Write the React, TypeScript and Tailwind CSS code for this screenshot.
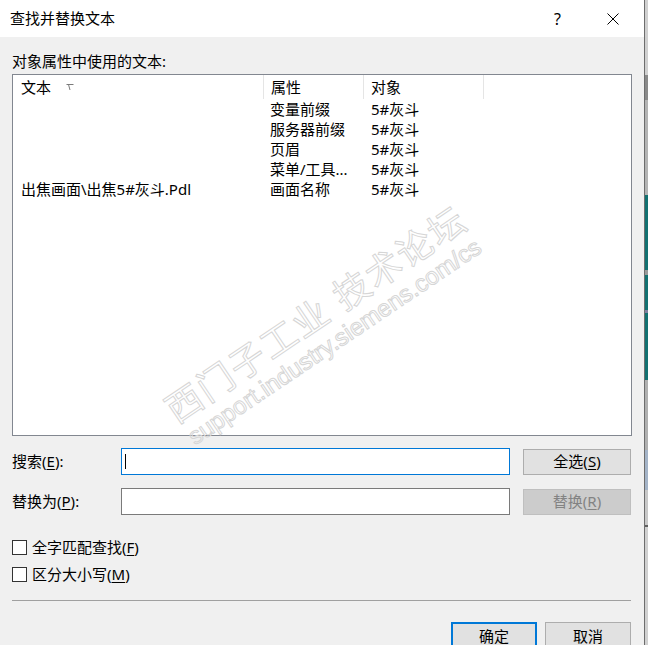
import type { ReactNode } from "react"

function Key({ k }: { k: string }) {
  return (
    <span>
      (<span className="underline underline-offset-2">{k}</span>)
    </span>
  )
}

const rows: [string, string, string][] = [
  ["", "变量前缀", "5#灰斗"],
  ["", "服务器前缀", "5#灰斗"],
  ["", "页眉", "5#灰斗"],
  ["", "菜单/工具...", "5#灰斗"],
  ["出焦画面\\出焦5#灰斗.Pdl", "画面名称", "5#灰斗"],
]

const strip: [string, string][] = [
  ["h-[75px]", "bg-[#d0d0d0]"],
  ["h-[25px]", "bg-[#8a8a8a]"],
  ["h-[95px]", "bg-[#b4b4b4]"],
  ["h-[75px]", "bg-[#127171]"],
  ["h-[5px]", "bg-[#9a9a9a]"],
  ["h-[35px]", "bg-[#127171]"],
  ["h-[3px]", "bg-[#8080a0]"],
  ["h-[67px]", "bg-[#127171]"],
  ["h-[70px]", "bg-[#b0b0b0]"],
  ["h-[40px]", "bg-[#a4b4c8]"],
  ["h-[35px]", "bg-[#c8c8c8]"],
  ["h-[2px]", "bg-[#606060]"],
  ["h-[118px]", "bg-[#d0d0d0]"],
]

function Btn({ children, disabled }: { children: ReactNode; disabled?: boolean }) {
  return (
    <div
      className={
        disabled
          ? "ml-[13px] flex h-[26px] w-[108px] items-center justify-center border border-[#bfbfbf] bg-[#cccccc] text-[#838383]"
          : "ml-[13px] flex h-[26px] w-[108px] items-center justify-center border border-[#adadad] bg-[#e1e1e1]"
      }
    >
      {children}
    </div>
  )
}

export default function App() {
  return (
    <div className="relative flex h-[645px] w-[648px] overflow-hidden bg-[#f0f0f0] font-['Noto_Sans','Noto_Sans_CJK_SC',sans-serif] text-[15px] text-black">
      <div className="flex w-[645px] shrink-0 flex-col border-r border-[#6d6d6d]">
        {/* title bar */}
        <div className="flex h-[37px] shrink-0 items-center bg-white pl-[10px]">
          <span className="leading-none">查找并替换文本</span>
          <div className="ml-auto flex items-center pr-[25px]">
            <span className="mr-[46px] text-[16px] leading-none">?</span>
            <svg width="12" height="12" viewBox="0 0 12 12">
              <path d="M0.5 0.5 L11.5 11.5 M11.5 0.5 L0.5 11.5" stroke="#000" strokeWidth="1" />
            </svg>
          </div>
        </div>

        <div className="flex flex-col px-[12px]">
          <div className="mt-[14px] leading-[20px]">对象属性中使用的文本:</div>

          {/* list view */}
          <div className="mt-[3px] h-[362px] w-[620px] border border-[#828790] bg-white">
            <div className="flex h-[24px] items-center">
              <div className="flex h-full w-[251px] items-center border-r border-[#e5e5e5] pl-[8px]">
                <span>文本</span>
                <svg className="ml-[15px] mt-[1px]" width="8" height="7" viewBox="0 0 8 7">
                  <path d="M0.5 0.5 H7.5 M2.5 0.5 L4 6" stroke="#7a7a7a" strokeWidth="1" fill="none" />
                </svg>
              </div>
              <div className="flex h-full w-[100px] items-center border-r border-[#e5e5e5] pl-[7px]">属性</div>
              <div className="flex h-full w-[120px] items-center border-r border-[#e5e5e5] pl-[7px]">对象</div>
            </div>
            {rows.map(([text, prop, obj], i) => (
              <div key={i} className="flex h-[20px] items-center leading-[20px]">
                <div className="w-[251px] pl-[8px]">{text}</div>
                <div className="w-[100px] pl-[6px]">{prop}</div>
                <div className="w-[120px] pl-[7px]">{obj}</div>
              </div>
            ))}
          </div>

          {/* search */}
          <div className="mt-[12px] flex h-[27px] items-center">
            <div className="w-[109px]">
              搜索<Key k="E" />:
            </div>
            <div className="flex h-[27px] w-[389px] items-center border border-[#0078d7] bg-white pl-[3px]">
              <div className="h-[15px] w-px bg-black" />
            </div>
            <Btn>
              全选<Key k="S" />
            </Btn>
          </div>

          <div className="mt-[13px] flex h-[27px] items-center">
            <div className="w-[109px]">
              替换为<Key k="P" />:
            </div>
            <div className="h-[27px] w-[389px] border border-[#7a7a7a] bg-white" />
            <Btn disabled>
              替换<Key k="R" />
            </Btn>
          </div>

          {/* options */}
          <div className="mt-[22px] flex h-[20px] items-center">
            <div className="h-[15px] w-[15px] border border-[#333333] bg-white" />
            <span className="ml-[5px]">
              全字匹配查找<Key k="F" />
            </span>
          </div>
          <div className="mt-[7px] flex h-[20px] items-center">
            <div className="h-[15px] w-[15px] border border-[#333333] bg-white" />
            <span className="ml-[5px]">
              区分大小写<Key k="M" />
            </span>
          </div>

          <div className="mt-[16px] h-px w-[619px] bg-[#a0a0a0]" />

          <div className="mt-[21px] flex justify-end gap-[8px] pr-[1px]">
            <div className="flex h-[28px] w-[86px] items-center justify-center border-2 border-[#0078d7] bg-[#e1e1e1]">确定</div>
            <div className="flex h-[28px] w-[86px] items-center justify-center border border-[#adadad] bg-[#e1e1e1]">取消</div>
          </div>
        </div>
      </div>

      {/* window behind the dialog */}
      <div className="flex w-[3px] shrink-0 flex-col">
        {strip.map(([h, c], i) => (
          <div key={i} className={`${h} ${c} shrink-0`} />
        ))}
      </div>

      {/* forum watermark */}
      <div className="pointer-events-none absolute left-[324px] top-[326px] flex -translate-x-1/2 -translate-y-1/2 -rotate-[34deg] flex-col items-center whitespace-nowrap font-['Liberation_Sans','Noto_Sans_CJK_SC',sans-serif] leading-none text-transparent [-webkit-text-stroke:1px_#d6d6d6]">
        <span className="text-[36px] tracking-[2px]">西门子工业 技术论坛</span>
        <span className="mt-[2px] text-[24px]">support.industry.siemens.com/cs</span>
      </div>
    </div>
  )
}
